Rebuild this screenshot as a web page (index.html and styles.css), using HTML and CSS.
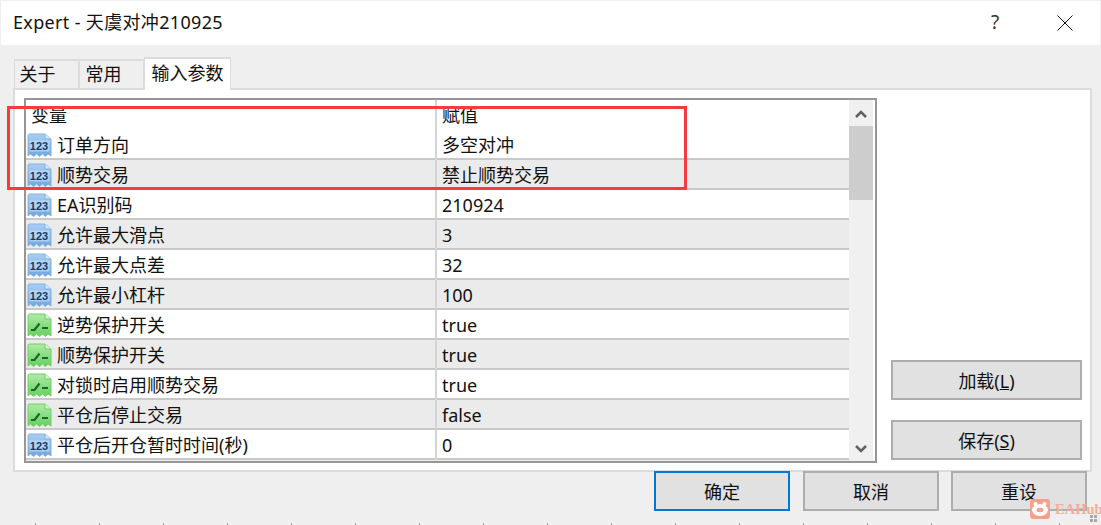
FILE: index.html
```html
<!DOCTYPE html>
<html lang="zh">
<head>
<meta charset="utf-8">
<title>Expert</title>
<link rel="stylesheet" href="styles.css">
</head>
<body>
<svg class="defs" width="0" height="0" aria-hidden="true">
  <defs>
    <linearGradient id="blue" x1="0" y1="0" x2="0" y2="1"><stop offset="0" stop-color="#a9cff5"/><stop offset="1" stop-color="#6ea6e0"/></linearGradient>
    <linearGradient id="green" x1="0" y1="0" x2="0" y2="1"><stop offset="0" stop-color="#aeeca6"/><stop offset="1" stop-color="#66cf5c"/></linearGradient>
    <symbol id="num" viewBox="0 0 25 24">
      <path d="M1 2.500Q1 1 2.500 1H18L24 6V23L21 21 18.500 23.500 15.500 21 12.500 23.500 9.500 21 6.500 23.500 3.500 21 1 23Z" fill="url(#blue)" stroke="#86b2de"/>
      <path d="M18 1V6H24" fill="#d5e7fa" stroke="#86b2de"/>
      <rect x="2.500" y="7.500" width="20" height="11" fill="#d5e6f8" opacity=".55"/>
      <text x="12" y="17" class="num-text">123</text>
    </symbol>
    <symbol id="bool" viewBox="0 0 25 24">
      <path d="M1 2.500Q1 1 2.500 1H18L24 6V23L21 21 18.500 23.500 15.500 21 12.500 23.500 9.500 21 6.500 23.500 3.500 21 1 23Z" fill="url(#green)" stroke="#72cc6a"/>
      <path d="M18 1V6H24" fill="#d8f7d3" stroke="#72cc6a"/>
      <path d="M4 17H7.500L12.500 10.500M15 15H21" fill="none" stroke="#146a2c" stroke-width="2.200"/>
    </symbol>
  </defs>
</svg>
<div class="dialog">
  <header class="titlebar">
    <span class="title">Expert - 天虞对冲210925</span>
    <span class="help">?</span>
    <svg class="close" width="16" height="16" viewBox="0 0 16 16"><path d="M.5.500 15.500 15.500M15.500.500.500 15.500" stroke="#111" fill="none"/></svg>
  </header>
  <nav class="tabs">
    <span class="tab tab-a">关于</span>
    <span class="tab tab-b">常用</span>
    <span class="tab tab-active">输入参数</span>
  </nav>
  <section class="panel">
    <div class="grid">
      <div class="table">
        <div class="row head"><span class="cell name head-name">变量</span><span class="cell value">赋值</span></div>
        <div class="row"><span class="cell name"><svg class="ico"><use href="#num"/></svg>订单方向</span><span class="cell value">多空对冲</span></div>
        <div class="row alt"><span class="cell name"><svg class="ico"><use href="#num"/></svg>顺势交易</span><span class="cell value">禁止顺势交易</span></div>
        <div class="row"><span class="cell name"><svg class="ico"><use href="#num"/></svg>EA识别码</span><span class="cell value">210924</span></div>
        <div class="row alt"><span class="cell name"><svg class="ico"><use href="#num"/></svg>允许最大滑点</span><span class="cell value">3</span></div>
        <div class="row"><span class="cell name"><svg class="ico"><use href="#num"/></svg>允许最大点差</span><span class="cell value">32</span></div>
        <div class="row alt"><span class="cell name"><svg class="ico"><use href="#num"/></svg>允许最小杠杆</span><span class="cell value">100</span></div>
        <div class="row"><span class="cell name"><svg class="ico"><use href="#bool"/></svg>逆势保护开关</span><span class="cell value">true</span></div>
        <div class="row alt"><span class="cell name"><svg class="ico"><use href="#bool"/></svg>顺势保护开关</span><span class="cell value">true</span></div>
        <div class="row"><span class="cell name"><svg class="ico"><use href="#bool"/></svg>对锁时启用顺势交易</span><span class="cell value">true</span></div>
        <div class="row alt"><span class="cell name"><svg class="ico"><use href="#bool"/></svg>平仓后停止交易</span><span class="cell value">false</span></div>
        <div class="row"><span class="cell name"><svg class="ico"><use href="#num"/></svg>平仓后开仓暂时时间(秒)</span><span class="cell value">0</span></div>
        <div class="row alt"></div>
      </div>
      <div class="scrollbar">
        <svg class="arrow" width="12" height="8" viewBox="0 0 12 8"><path d="M1 7 6 2 11 7" fill="none" stroke="#606060" stroke-width="2.500"/></svg>
        <div class="thumb"></div>
        <div class="track"></div>
        <svg class="arrow" width="12" height="8" viewBox="0 0 12 8"><path d="M1 1 6 6 11 1" fill="none" stroke="#606060" stroke-width="2.500"/></svg>
      </div>
    </div>
    <div class="side">
      <button class="btn side-btn">加载(<u>L</u>)</button>
      <button class="btn side-btn">保存(<u>S</u>)</button>
    </div>
  </section>
  <footer class="footer">
    <button class="btn foot-btn primary">确定</button>
    <button class="btn foot-btn">取消</button>
    <button class="btn foot-btn">重设</button>
  </footer>
</div>
<div class="highlight"></div>
<div class="ticks"></div>
<div class="watermark">
  <svg width="20" height="20" viewBox="0 0 20 20"><rect width="20" height="20" rx="3" fill="#f7a08d"/><circle cx="5.500" cy="5" r="2" fill="#fff"/><circle cx="14.500" cy="5" r="2" fill="#fff"/><ellipse cx="10" cy="11" rx="8" ry="6" fill="#fff"/><ellipse cx="10" cy="11" rx="3.500" ry="2.200" fill="#f7a08d"/></svg>
  <span class="wm-text">EAHub</span>
</div>
<div class="wm-dots"><i></i><i></i><i></i><i></i></div>
</body>
</html>
```
FILE: styles.css
```css
* { box-sizing: border-box; }
html, body { margin: 0; height: 100%; }
body {
  position: relative;
  width: 1101px;
  height: 525px;
  overflow: hidden;
  background: #efefef;
  font-family: "Noto Sans", "Noto Sans CJK SC", sans-serif;
  font-size: 18px;
  color: #111;
}
.defs { position: absolute; }
.dialog { padding-top: 1px; }
.titlebar {
  display: flex;
  align-items: center;
  height: 44px;
  margin: 0 1px;
  padding: 0 27px 2px 12px;
  background: #fff;
}
.title { flex: 1; line-height: 40px; letter-spacing: .33px; }
.help { width: 66px; font-size: 19px; color: #333; }
.close { display: block; margin-top: 1px; }
.tabs {
  display: flex;
  align-items: flex-end;
  height: 43px;
  padding-left: 14px;
}
.tab {
  height: 29px;
  line-height: 27px;
  text-align: center;
  border: 2px solid #dcdcdc;
  border-bottom: 0;
  border-left-width: 1px;
  border-right-width: 1px;
}
.tab-a { width: 65px; padding-right: 18px; }
.tab-b { width: 65px; padding-right: 16px; }
.tab-active {
  position: relative;
  top: 2px;
  width: 87px;
  height: 33px;
  line-height: 28px;
  background: #fff;
}
.panel {
  display: flex;
  gap: 14px;
  height: 384px;
  margin: 0 9px 0 13px;
  padding: 8px 10px 7px 9px;
  background: #fff;
  border: 2px solid #dcdcdc;
}
.grid {
  display: flex;
  flex: none;
  width: 853px;
  height: 365px;
  border: 2px solid #969696;
  overflow: hidden;
  background: #fff;
}
.table { flex: none; width: 823px; }
.row {
  display: flex;
  height: 30px;
  line-height: 28px;
  border-bottom: 2px solid #c8c8c8;
  white-space: nowrap;
}
.row.head { border-bottom: 0; }
.alt { background: #ebebeb; }
.cell { display: flex; align-items: center; height: 30px; }
.name {
  flex: none;
  width: 411px;
  border-right: 2px solid #d4d4d4;
  margin-bottom: -2px;
}
.head-name { padding-left: 5px; }
.value { padding-left: 5px; }
.ico { flex: none; width: 25px; height: 24px; margin: 0 5px 0 1px; }
.num-text {
  font-family: "Liberation Sans", sans-serif;
  font-size: 11px;
  font-weight: 700;
  fill: #123c68;
  text-anchor: middle;
}
.scrollbar {
  display: flex;
  flex-direction: column;
  align-items: center;
  width: 24px;
  margin-right: 2px;
  background: #f0f0f0;
  flex: none;
}
.arrow { flex: none; margin: 10px 0 8px; }
.thumb { flex: none; width: 24px; height: 74px; background: #cdcdcd; }
.track { flex: 1; }
.side {
  display: flex;
  flex-direction: column;
  justify-content: flex-end;
  gap: 20px;
  width: 191px;
  padding-bottom: 3px;
}
.btn {
  height: 40px;
  padding: 0;
  background: #e1e1e1;
  border: 2px solid #adadad;
  font: inherit;
  color: #111;
}
.side-btn { width: 191px; }
.footer {
  display: flex;
  justify-content: flex-end;
  gap: 12px;
  margin-top: -1px;
  padding-right: 14px;
}
.foot-btn { width: 136px; }
.primary { border-color: #0078d7; margin-right: 1px; }
.highlight {
  position: absolute;
  left: 7px;
  top: 106px;
  width: 680px;
  height: 84px;
  border: 3px solid #f53c3c;
}
.ticks {
  position: absolute;
  left: 0;
  bottom: 0;
  width: 100%;
  height: 2px;
  background: repeating-linear-gradient(90deg, transparent 0 35px, #a8a8a8 35px 36px, transparent 36px 64px);
}
.watermark {
  position: absolute;
  left: 1030px;
  top: 499px;
  display: flex;
  align-items: center;
  gap: 5px;
}
.wm-text {
  font-family: "Liberation Serif", serif;
  font-size: 14.500px;
  font-weight: 700;
  color: #f7ab9b;
}
.wm-dots {
  position: absolute;
  left: 1090px;
  top: 515px;
  display: grid;
  grid-template-columns: 3px 3px;
  gap: 1px;
}
.wm-dots i { display: block; height: 3px; background: #a8a8a8; }
```
